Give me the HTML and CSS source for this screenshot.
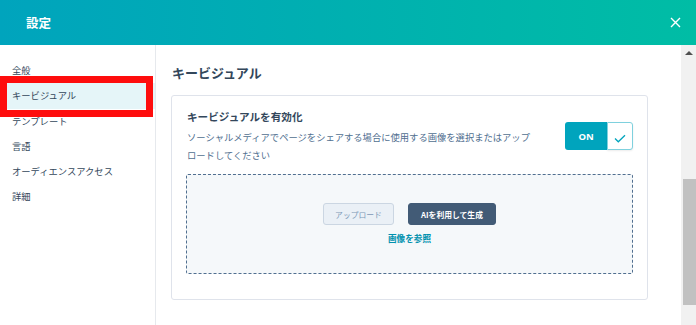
FILE: index.html
```html
<!DOCTYPE html>
<html lang="ja">
<head>
<meta charset="utf-8">
<title>設定</title>
<link rel="stylesheet" href="styles.css">
</head>
<body>
<div class="app">
  <header class="topbar">
    <h1 class="topbar-title">設定</h1>
    <button class="close-btn" aria-label="閉じる">
      <svg width="11" height="11" viewBox="0 0 11 11"><path d="M1 1 L10 10 M10 1 L1 10" stroke="#fff" stroke-width="1.4" fill="none"/></svg>
    </button>
  </header>
  <div class="body">
    <nav class="sidebar">
      <a class="nav-item">全般</a>
      <a class="nav-item active">キービジュアル</a>
      <a class="nav-item">テンプレート</a>
      <a class="nav-item">言語</a>
      <a class="nav-item">オーディエンスアクセス</a>
      <a class="nav-item">詳細</a>
      <div class="annotation"></div>
    </nav>
    <main class="content">
      <h2 class="section-title">キービジュアル</h2>
      <section class="card">
        <div class="card-head">
          <div class="card-text">
            <h3 class="card-title">キービジュアルを有効化</h3>
            <p class="card-desc">ソーシャルメディアでページをシェアする場合に使用する画像を選択またはアップロードしてください</p>
          </div>
          <div class="toggle">
            <span class="toggle-on">ON</span>
            <span class="toggle-check">
              <svg width="12" height="9" viewBox="0 0 12 9"><path d="M1 4.5 L4.3 7.8 L11 1.2" stroke="#00a4bd" stroke-width="1.3" fill="none"/></svg>
            </span>
          </div>
        </div>
        <div class="dropzone">
          <div class="dz-buttons">
            <button class="btn btn-upload">アップロード</button>
            <button class="btn btn-ai">AIを利用して生成</button>
          </div>
          <a class="dz-link">画像を参照</a>
        </div>
      </section>
    </main>
    <div class="scrollbar">
      <div class="sb-arrow"></div>
      <div class="sb-track">
        <div class="sb-thumb"></div>
      </div>
    </div>
  </div>
</div>
</body>
</html>
```

FILE: styles.css
```css
* { box-sizing: border-box; }
html, body { margin: 0; padding: 0; }
body {
  width: 696px;
  height: 325px;
  overflow: hidden;
  font-family: "Noto Sans CJK JP", "Noto Sans", sans-serif;
  color: #33475b;
  background: #fff;
}
.app { display: flex; flex-direction: column; height: 325px; }

.topbar {
  height: 45px;
  flex: 0 0 45px;
  display: flex;
  align-items: center;
  justify-content: space-between;
  padding: 0 15px 0 26px;
  background: linear-gradient(90deg, #00a4bd 0%, #00b0b0 50%, #00bda5 100%);
}
.topbar-title {
  margin: 0;
  font-size: 12.5px;
  font-weight: 700;
  color: #fff;
  line-height: 16px;
}
.close-btn {
  border: 0;
  background: none;
  padding: 0;
  width: 11px;
  height: 11px;
  display: flex;
}

.body { flex: 1; display: flex; min-height: 0; }

.sidebar {
  position: relative;
  width: 156px;
  flex: 0 0 156px;
  border-right: 1px solid #e6e9ed;
  padding-top: 13px;
  display: flex;
  flex-direction: column;
}
.nav-item {
  display: block;
  height: 25.3px;
  line-height: 25.3px;
  padding-left: 12px;
  font-size: 9.3px;
  color: #33475b;
  white-space: nowrap;
}
.nav-item.active { background: #e5f5f8; }
.annotation {
  position: absolute;
  left: 0;
  top: 31px;
  width: 153px;
  height: 41px;
  border: 7px solid #fe0d0d;
  pointer-events: none;
}

.content {
  flex: 1;
  padding: 19px 33px 0 15px;
  min-width: 0;
}
.section-title {
  margin: 0 0 13px 1px;
  font-size: 13px;
  font-weight: 700;
  line-height: 18px;
  color: #33475b;
}
.card {
  border: 1px solid #dfe3eb;
  border-radius: 3px;
  padding: 13px 14px 25px 14px;
}
.card-head {
  display: flex;
  align-items: center;
  justify-content: space-between;
  padding-left: 1px;
}
.card-title {
  margin: 0 0 3px;
  font-size: 10.6px;
  font-weight: 700;
  line-height: 16px;
  color: #33475b;
}
.card-desc {
  margin: 0;
  max-width: 350px;
  font-size: 9.3px;
  line-height: 18px;
  color: #516f90;
}
.toggle { display: flex; height: 28px; margin-top: -1px; }
.toggle-on {
  width: 42px;
  background: #00a4bd;
  color: #fff;
  font-size: 9.5px;
  font-weight: 700;
  display: flex;
  align-items: center;
  justify-content: center;
  border-radius: 3px 0 0 3px;
  font-family: "Noto Sans", sans-serif;
}
.toggle-check {
  width: 26px;
  background: #fff;
  border: 1px solid #7fd1de;
  border-radius: 0 3px 3px 0;
  display: flex;
  align-items: center;
  justify-content: center;
  padding-top: 4px;
  box-shadow: 0 1px 2px rgba(0, 0, 0, 0.08);
}

.dropzone {
  margin-top: 10px;
  height: 100px;
  background: #f5f8fa;
  border: 1px dashed #516f90;
  border-radius: 2px;
  display: flex;
  flex-direction: column;
  align-items: center;
  justify-content: center;
  gap: 6px;
}
.dz-buttons { display: flex; gap: 14px; }
.btn {
  height: 22px;
  border-radius: 3px;
  font-family: inherit;
  font-size: 7.8px;
  padding: 0;
  display: flex;
  align-items: center;
  justify-content: center;
}
.btn-upload {
  width: 71px;
  background: #eaf0f6;
  border: 1px solid #cbd6e2;
  color: #7c98b6;
}
.btn-ai {
  width: 88px;
  background: #425b76;
  border: 1px solid #425b76;
  color: #fff;
  font-weight: 700;
}
.dz-link {
  font-size: 8.6px;
  font-weight: 700;
  line-height: 14px;
  color: #0091ae;
}

.scrollbar {
  width: 15px;
  flex: 0 0 15px;
  background: #f1f1f1;
  display: flex;
  flex-direction: column;
}
.sb-arrow {
  height: 15px;
  flex: 0 0 15px;
  display: flex;
  align-items: center;
  justify-content: center;
}
.sb-arrow::before {
  content: "";
  border-left: 4px solid transparent;
  border-right: 4px solid transparent;
  border-bottom: 4px solid #505050;
}
.sb-track { flex: 1; padding: 119px 0 20px 2px; display: flex; }
.sb-thumb { flex: 1; background: #c1c1c1; }
```
